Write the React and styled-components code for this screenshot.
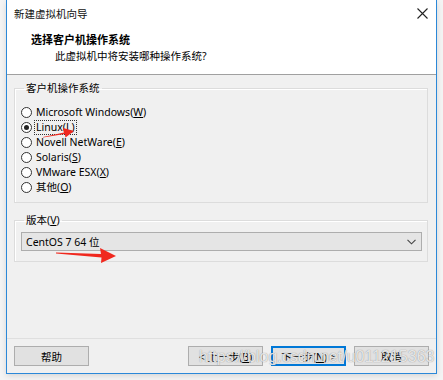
import React from 'react';
import styled, { createGlobalStyle } from 'styled-components';

const GlobalStyle = createGlobalStyle`
  html, body {
    margin: 0;
    padding: 0;
    background: #f4f4f4;
  }
  body {
    font-family: "Noto Sans", "Noto Sans CJK SC", sans-serif;
    font-size: 10.5px;
    color: #000;
  }
`;

const Page = styled.div`
  position: relative;
  width: 443px;
  height: 380px;
  overflow: hidden;
`;

const Window = styled.div`
  margin-left: 6px;
  width: 431px;
  height: 374px;
  box-sizing: border-box;
  border: 1px solid #2b88d8;
  border-top: none;
  background: #f0f0f0;
  display: flex;
  flex-direction: column;
  box-shadow: 0 2px 6px rgba(0, 0, 0, 0.12);
`;

const TitleBar = styled.div`
  height: 26px;
  background: #fff;
  display: flex;
  align-items: center;
  justify-content: space-between;
  padding: 0 8px 0 7px;
`;

const TitleText = styled.span`
  font-size: 10.5px;
  color: #111;
`;

const Header = styled.div`
  height: 49px;
  background: #fff;
  border-bottom: 1px solid #a0a0a0;
  display: flex;
  flex-direction: column;
  padding-top: 6px;
  box-sizing: border-box;
`;

const HeaderTitle = styled.div`
  font-weight: bold;
  font-size: 11px;
  padding-left: 24px;
  line-height: 16px;
`;

const HeaderSub = styled.div`
  padding-left: 48px;
  line-height: 16px;
`;

const Body = styled.div`
  flex: 1;
  display: flex;
  flex-direction: column;
  padding: 5px 8px 0 7px;
`;

const Group = styled.fieldset`
  margin: 0 0 ${p => p.$gap || 0}px 0;
  padding: ${p => p.$pad};
  border: 1px solid #dcdcdc;
  box-shadow: inset 1px 1px 0 #fff;
  min-width: 0;
`;

const Legend = styled.legend`
  padding: 0 2px;
  margin-left: 3px;
  line-height: 16px;
`;

const RadioList = styled.div`
  display: flex;
  flex-direction: column;
`;

const RadioRow = styled.div`
  display: flex;
  align-items: center;
  height: 15px;
  gap: 3px;
`;

const RadioDot = styled.span`
  width: 11px;
  height: 11px;
  box-sizing: border-box;
  border: 1px solid #333;
  border-radius: 50%;
  background: #fff;
  display: flex;
  align-items: center;
  justify-content: center;
  &::after {
    content: '';
    width: 5px;
    height: 5px;
    border-radius: 50%;
    background: ${p => (p.$checked ? '#222' : 'transparent')};
  }
`;

const RadioLabel = styled.span`
  line-height: 13px;
  padding: 0 1px;
  outline: ${p => (p.$focus ? '1px dotted #333' : 'none')};
`;

const Select = styled.div`
  height: 19px;
  box-sizing: border-box;
  border: 1px solid #adadad;
  background: #e5e5e5;
  display: flex;
  align-items: center;
  justify-content: space-between;
  padding: 0 5px 0 4px;
`;

const Footer = styled.div`
  margin-top: auto;
  border-top: 1px solid #dfdfdf;
  display: flex;
  align-items: center;
  height: 34px;
  margin-left: -7px;
  margin-right: -8px;
  padding: 0 7px 0 7px;
  gap: 8px;
`;

const Button = styled.button`
  width: 75px;
  height: 20px;
  box-sizing: border-box;
  border: ${p => (p.$default ? '2px solid #0078d7' : '1px solid #adadad')};
  background: #e1e1e1;
  font-family: inherit;
  font-size: 10.5px;
  color: #000;
  padding: 0;
  margin: 0;
`;

const Spacer = styled.div`
  flex: 1;
`;

const Arrow = styled.svg`
  position: absolute;
  left: 0;
  top: 0;
  pointer-events: none;
`;

const Watermark = styled.div`
  position: absolute;
  left: 199px;
  top: 348px;
  white-space: nowrap;
  font-family: "Liberation Sans", Arial, sans-serif;
  font-size: 16px;
  color: rgba(255, 255, 255, 0.8);
  text-shadow: 0 0 1px rgba(110, 110, 110, 0.9);
  pointer-events: none;
`;

const U = styled.u`
  text-decoration: underline;
`;

const systems = [
  { name: 'Microsoft Windows', key: 'W' },
  { name: 'Linux', key: 'L', checked: true },
  { name: 'Novell NetWare', key: 'E' },
  { name: 'Solaris', key: 'S' },
  { name: 'VMware ESX', key: 'X' },
  { name: '其他', key: 'O' },
];

function CloseIcon() {
  return (
    <svg width="11" height="11" viewBox="0 0 11 11">
      <path d="M0.5 0.5 L10.5 10.5 M10.5 0.5 L0.5 10.5" stroke="#222" strokeWidth="1.1" />
    </svg>
  );
}

function Chevron() {
  return (
    <svg width="9" height="6" viewBox="0 0 9 6">
      <path d="M0.5 0.8 L4.5 4.8 L8.5 0.8" fill="none" stroke="#444" strokeWidth="1.1" />
    </svg>
  );
}

export default function App() {
  return (
    <Page>
      <GlobalStyle />
      <Window>
        <TitleBar>
          <TitleText>新建虚拟机向导</TitleText>
          <CloseIcon />
        </TitleBar>
        <Header>
          <HeaderTitle>选择客户机操作系统</HeaderTitle>
          <HeaderSub>此虚拟机中将安装哪种操作系统?</HeaderSub>
        </Header>
        <Body>
          <Group $pad="9px 6px 7px 6px" $gap={9}>
            <Legend>客户机操作系统</Legend>
            <RadioList>
              {systems.map(s => (
                <RadioRow key={s.key}>
                  <RadioDot $checked={s.checked} />
                  <RadioLabel $focus={s.checked}>
                    {s.name}(<U>{s.key}</U>)
                  </RadioLabel>
                </RadioRow>
              ))}
            </RadioList>
          </Group>
          <Group $pad="4px 5px 10px 6px">
            <Legend>
              版本(<U>V</U>)
            </Legend>
            <Select>
              <span>CentOS 7 64 位</span>
              <Chevron />
            </Select>
          </Group>
          <Footer>
            <Button>帮助</Button>
            <Spacer />
            <Button>
              &lt; 上一步(<U>B</U>)
            </Button>
            <Button $default>
              下一步(<U>N</U>) &gt;
            </Button>
            <Button>取消</Button>
          </Footer>
        </Body>
      </Window>
      <Arrow width="443" height="380" viewBox="0 0 443 380">
        <path d="M43 137 L64 132.5 L63 128 L74 131 L65.5 137.5 L64.8 134 L43 137.6 Z" fill="#f0281e" />
        <path d="M56 252.5 L101 254 L100 248 L116 256 L101 263 L101.5 257.5 L56 253.6 Z" fill="#f0281e" />
      </Arrow>
      <Watermark>https://blog.csdn.net/u011215363</Watermark>
    </Page>
  );
}
